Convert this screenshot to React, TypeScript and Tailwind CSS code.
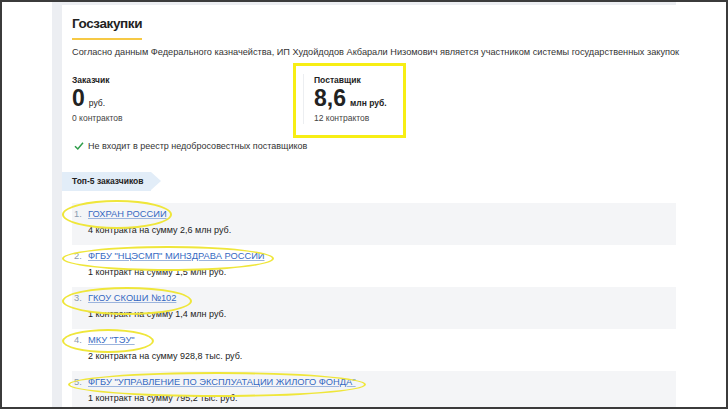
import React from 'react';

const customers = [
  { n: 1, name: 'ГОХРАН РОССИИ', sum: '4 контракта на сумму 2,6 млн руб.' },
  { n: 2, name: 'ФГБУ "НЦЭСМП" МИНЗДРАВА РОССИИ', sum: '1 контракт на сумму 1,5 млн руб.' },
  { n: 3, name: 'ГКОУ СКОШИ №102', sum: '1 контракт на сумму 1,4 млн руб.' },
  { n: 4, name: 'МКУ "ТЭУ"', sum: '2 контракта на сумму 928,8 тыс. руб.' },
  { n: 5, name: 'ФГБУ "УПРАВЛЕНИЕ ПО ЭКСПЛУАТАЦИИ ЖИЛОГО ФОНДА"', sum: '1 контракт на сумму 795,2 тыс. руб.' },
];

// hand-drawn annotation ellipses from the screenshot: [left, top, width, height]
const marks = [
  [60, 198, 110, 29],
  [60, 244, 212, 25],
  [60, 285, 130, 28],
  [60, 327, 92, 24],
  [66, 370, 298, 25],
];

const App: React.FC = () => {
  return (
    <div
      className="relative w-[728px] h-[409px] overflow-hidden border-2 border-[#3b3b3b] bg-white text-[#222]"
      style={{ fontFamily: '"Liberation Sans", Arial, sans-serif' }}
    >
      <div className="ml-[50px] w-[624px] h-full bg-[#eceef2] pt-[3px] pl-[10px]">
        <div className="bg-white h-full pt-[6px]">
          <div className="pl-[10px]">
            <h2 className="inline-block text-[13.5px] tracking-[-0.4px] font-bold leading-[20px] pb-[4px] border-b-2 border-[#f6c945]">
              Госзакупки
            </h2>
            <p className="mt-[5px] text-[9.2px] leading-[14px] text-[#333] whitespace-nowrap">
              Согласно данным Федерального казначейства, ИП Худойдодов Акбарали Низомович является участником системы государственных закупок
            </p>

            <div className="mt-[15px] flex">
              <div className="w-[231px]">
                <div className="text-[8.5px] font-bold leading-[12px]">Заказчик</div>
                <div className="mt-[2px] h-[20px] flex items-baseline gap-[4px] leading-[20px]">
                  <span className="text-[23px] font-bold">0</span>
                  <span className="text-[8.5px]">руб.</span>
                </div>
                <div className="mt-[4px] text-[8.5px] leading-[12px] text-[#444]">0 контрактов</div>
              </div>
              <div className="border-l border-[#eceef1] pl-[10px]">
                <div className="text-[8.5px] font-bold leading-[12px]">Поставщик</div>
                <div className="mt-[2px] h-[20px] flex items-baseline gap-[4px] leading-[20px]">
                  <span className="text-[23px] font-bold">8,6</span>
                  <span className="text-[8.5px] font-bold">млн руб.</span>
                </div>
                <div className="mt-[4px] text-[8.5px] leading-[12px] text-[#444]">12 контрактов</div>
              </div>
            </div>

            <div className="mt-[16px] flex items-center gap-[4px] text-[9px] leading-[12px] text-[#333]">
              <svg width="10" height="10" viewBox="0 0 10 10" className="ml-[2px]">
                <path d="M1 5.2 L3.8 8 L9 1.8" fill="none" stroke="#2e9d4a" strokeWidth="1.5" />
              </svg>
              <span>Не входит в реестр недобросовестных поставщиков</span>
            </div>
          </div>

          <div className="mt-[20px] flex">
            <div className="h-[19px] flex items-center bg-[#e2edf8] pl-[10px] pr-[8px] text-[8.5px] font-bold">
              Топ-5 заказчиков
            </div>
            <div className="w-0 h-0 border-y-[9.5px] border-y-transparent border-l-[10px] border-l-[#e2edf8]" />
          </div>

          <ul className="mt-[12px] ml-[10px]">
            {customers.map((c) => (
              <li
                key={c.n}
                className={`h-[42px] pt-[5px] ${c.n % 2 === 1 ? 'bg-[#f4f5f7]' : 'bg-white'}`}
              >
                <div className="flex text-[9.3px] leading-[13px]">
                  <span className="w-[16px] pl-[2px] text-[#8a9bb0]">{c.n}.</span>
                  <span className="text-[#3569c2] underline decoration-[#9bb4dd]">{c.name}</span>
                </div>
                <div className="mt-[3px] pl-[16px] text-[9px] leading-[13px] text-[#222]">{c.sum}</div>
              </li>
            ))}
          </ul>
        </div>
      </div>

      {/* annotation overlays */}
      <div className="absolute left-[291px] top-[61px] w-[113px] h-[75px] border-[3px] border-[#f7ee14]" />
      {marks.map(([l, t, w, h], i) => (
        <div
          key={i}
          className="absolute rounded-[50%] border-2 border-[#efe63a]"
          style={{ left: l, top: t, width: w, height: h }}
        />
      ))}
    </div>
  );
};

export default App;
